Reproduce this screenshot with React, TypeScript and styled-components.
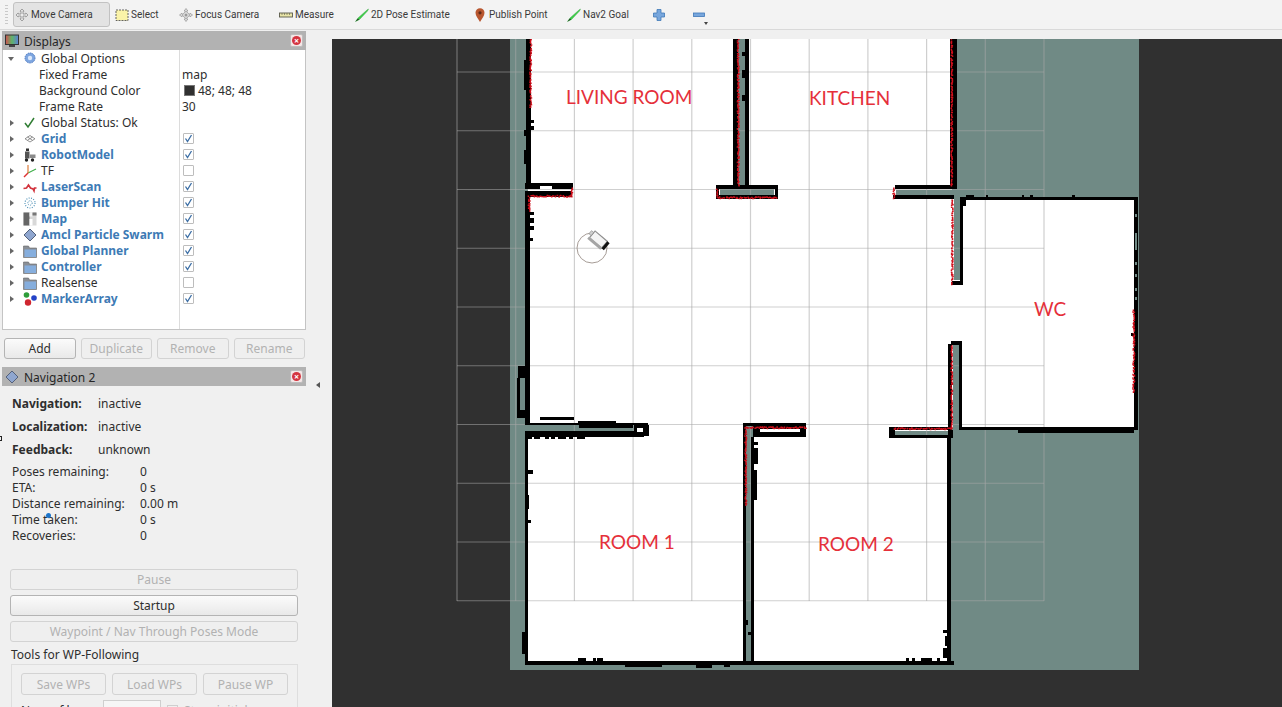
import { FC, ReactNode } from "react";
import styled, { createGlobalStyle } from "styled-components";

const GlobalStyle = createGlobalStyle`
  html, body {
    margin: 0;
    padding: 0;
    background: #f0f0f0;
  }
  * {
    box-sizing: border-box;
  }
`;

const Window = styled.div`
  width: 1282px;
  height: 707px;
  overflow: hidden;
  position: relative;
  display: flex;
  flex-direction: column;
  background: #f0f0f0;
  color: #2e2e2e;
  font-family: "Noto Sans", "Open Sans", sans-serif;
  font-size: 12px;
`;

const Toolbar = styled.div`
  height: 30px;
  flex: none;
  display: flex;
  align-items: flex-start;
  padding: 2px 0 0 5px;
  border-bottom: 1px solid #d9d9d9;
  background: #f3f3f3;
  font-family: "Roboto", "Noto Sans", sans-serif;
  font-size: 10px;
`;

const ToolbarHandle = styled.span`
  width: 3px;
  height: 20px;
  margin: 3px 5px 0 0;
  background: repeating-linear-gradient(#c9c9c9 0 1px, transparent 1px 3px);
`;

const Tool = styled.div<{ $width: number; $active?: boolean }>`
  width: ${({ $width }) => $width}px;
  height: 25px;
  flex: none;
  position: relative;
  display: flex;
  align-items: center;
  gap: 2px;
  padding-left: 2px;
  white-space: nowrap;
  color: #3a3a3a;
  ${({ $active }) =>
    $active
      ? "background: #e3e3e3; border: 1px solid #c2c2c2; border-radius: 3px; padding-left: 1px;"
      : ""}
`;

const ToolMenuArrow = styled.span`
  position: absolute;
  left: 14px;
  top: 20px;
  border-left: 2px solid transparent;
  border-right: 2px solid transparent;
  border-top: 3px solid #444;
`;

const Main = styled.div`
  flex: 1;
  display: flex;
  min-height: 0;
`;

const Sidebar = styled.div`
  width: 310px;
  flex: none;
  padding: 1px 4px 0 2px;
  overflow: hidden;
`;

const Splitter = styled.div`
  width: 22px;
  flex: none;
  display: flex;
  justify-content: center;
  padding-top: 352px;
`;

const SplitterArrow = styled.span`
  width: 0;
  height: 0;
  margin-left: -6px;
  border-top: 3px solid transparent;
  border-bottom: 3px solid transparent;
  border-right: 4px solid #555;
`;

const Viewport = styled.div`
  flex: 1;
  margin-top: 9px;
  position: relative;
  background: #303030;
  overflow: hidden;
`;

const MapCanvas = styled.svg`
  display: block;
  width: 950px;
  height: 668px;
  filter: blur(0.35px);
`;

const RoomLabel = styled.span<{ $x: number; $y: number }>`
  position: absolute;
  left: ${({ $x }) => $x - 332}px;
  top: ${({ $y }) => $y - 39}px;
  transform: translateY(-50%);
  font-family: "Lato", "Open Sans", sans-serif;
  font-size: 19px;
  line-height: 24px;
  color: #e5303a;
  white-space: nowrap;
`;

const DockTitle = styled.div`
  height: 19px;
  display: flex;
  align-items: center;
  gap: 5px;
  padding: 1px 3px 0;
  background: #b2b2b2;
  color: #262626;
`;

const DockName = styled.span`
  flex: 1;
`;

const CloseButton = styled.span`
  width: 13px;
  height: 13px;
  margin-top: -1px;
  border-radius: 2px;
  display: flex;
  align-items: center;
  justify-content: center;
  background: #f3e6e6;
  border: 1px solid #bdbdbd;
  &::after {
    content: "×";
    width: 9px;
    height: 9px;
    border-radius: 50%;
    background: #d4343f;
    color: #fff;
    font-size: 9px;
    line-height: 9px;
    text-align: center;
    font-weight: 700;
  }
`;

const Tree = styled.div`
  height: 280px;
  border: 1px solid #c4c4c4;
  border-top: none;
  background: linear-gradient(#dcdcdc, #dcdcdc) 176px 0 / 1px 100% no-repeat,
    #fff;
`;

const TreeRow = styled.div`
  height: 16px;
  display: grid;
  grid-template-columns: 177px 1fr;
  align-items: center;
`;

const TreeCell = styled.div<{ $indent?: number }>`
  display: flex;
  align-items: center;
  padding-left: ${({ $indent }) => $indent ?? 6}px;
  white-space: nowrap;
`;

const Expander = styled.span<{ $open?: boolean }>`
  width: 0;
  height: 0;
  ${({ $open }) =>
    $open
      ? `border-left: 3px solid transparent; border-right: 3px solid transparent; border-top: 4px solid #666; margin-left: -1px; margin-right: 9px;`
      : `border-top: 3px solid transparent; border-bottom: 3px solid transparent; border-left: 4px solid #666; margin-left: 1px; margin-right: 9px;`}
`;

const TreeIcon = styled.span`
  width: 14px;
  height: 14px;
  margin-right: 4px;
  display: flex;
  flex: none;
`;

const TreeLabel = styled.span<{ $on?: boolean }>`
  color: ${({ $on }) => ($on ? "#3d7ab5" : "#2e2e2e")};
  font-weight: ${({ $on }) => ($on ? 700 : 400)};
`;

const ValueCell = styled.div`
  padding-left: 2px;
  display: flex;
  align-items: center;
  gap: 3px;
`;

const Swatch = styled.span`
  width: 11px;
  height: 11px;
  margin-left: 2px;
  background: #303030;
  border: 1px solid #777;
`;

const Check = styled.span`
  width: 11px;
  height: 11px;
  margin-left: 1px;
  display: flex;
  background: #fff;
  border: 1px solid #bdbdbd;
  border-radius: 1px;
`;

const ButtonRow = styled.div`
  display: flex;
  gap: 5px;
  padding: 8px 1px 0 2px;
`;

const Button = styled.div<{ $off?: boolean; $height?: number }>`
  flex: 1;
  height: ${({ $height }) => $height ?? 21}px;
  display: flex;
  align-items: center;
  justify-content: center;
  border-radius: 3px;
  border: 1px solid ${({ $off }) => ($off ? "#d3d3d3" : "#b4b4b4")};
  background: ${({ $off }) =>
    $off ? "#efefef" : "linear-gradient(#fbfbfb, #e9e9e9)"};
  color: ${({ $off }) => ($off ? "#b2b2b2" : "#2e2e2e")};
  white-space: nowrap;
`;

const NavDock = styled.div`
  margin-top: 8px;
`;

const NavBody = styled.div`
  padding: 0 8px 0 8px;
`;

const StatusList = styled.div`
  padding: 9px 0 0 2px;
  display: flex;
  flex-direction: column;
  gap: 6px;
`;

const StatusRow = styled.div`
  height: 17px;
  display: grid;
  grid-template-columns: 86px 1fr;
  align-items: center;
`;

const StatusKey = styled.span`
  font-weight: 700;
`;

const StatsList = styled.div`
  padding: 5px 0 0 2px;
`;

const StatsRow = styled.div`
  height: 16px;
  display: grid;
  grid-template-columns: 128px 1fr;
  align-items: center;
  white-space: nowrap;
`;

const NavButtons = styled.div`
  margin-top: 26px;
  display: grid;
  row-gap: 5px;
`;

const GroupCaption = styled.div`
  height: 16px;
  margin-top: 5px;
  padding-left: 1px;
  line-height: 16px;
`;

const GroupBox = styled.div`
  height: 60px;
  margin: 1px 0 0 1px;
  padding: 8px 9px 0;
  border: 1px solid #dedede;
`;

const GroupButtons = styled.div`
  display: flex;
  gap: 6px;
`;

const LoopRow = styled.div`
  margin-top: 5px;
  display: flex;
  align-items: center;
  gap: 6px;
  white-space: nowrap;
`;

const LoopLabel = styled.span`
  width: 76px;
`;

const LoopInput = styled.span`
  width: 58px;
  height: 20px;
  background: #f6f6f6;
  border: 1px solid #cfcfcf;
`;

const LoopCheck = styled.span`
  width: 11px;
  height: 11px;
  border: 1px solid #cfcfcf;
`;

const LoopOption = styled.span`
  color: #b2b2b2;
`;

const CursorDot = styled.span`
  position: absolute;
  left: 46px;
  top: 513px;
  width: 5px;
  height: 5px;
  border-radius: 50%;
  background: #1c74c9;
`;

const EdgeMark = styled.span`
  position: absolute;
  left: 0;
  top: 436px;
  width: 2px;
  height: 5px;
  border: 1px solid #222;
  border-left: none;
`;

const IconSvg: FC<{ children: ReactNode; size?: number }> = ({ children, size = 14 }) => (
  <svg width={size} height={size} viewBox="0 0 14 14" style={{ flex: "none" }}>
    {children}
  </svg>
);

const MoveIcon = () => (
  <IconSvg>
    <path d="M7 1l2 2.200H8V6h2.800V5L13 7l-2.200 2V8H8v2.800h1L7 13l-2-2.200h1V8H3.200v1L1 7l2.200-2v1H6V3.200H5z" fill="#ececec" stroke="#8c8c8c" strokeWidth="0.8" />
  </IconSvg>
);

const SelectIcon = () => (
  <IconSvg>
    <rect x="1" y="2" width="12" height="10.500" fill="#faf3a8" stroke="#555" strokeWidth="0.9" strokeDasharray="2 1" />
  </IconSvg>
);

const FocusIcon = () => (
  <IconSvg>
    <path d="M7 0.500l1.800 2.500H7.700v1.200a3 3 0 012.100 2.100H11V5.200L13.500 7 11 8.800V7.700H9.800a3 3 0 01-2.100 2.100V11h1.100L7 13.500 5.200 11h1.100V9.800a3 3 0 01-2.100-2.100H3v1.100L0.500 7 3 5.200v1.100h1.200a3 3 0 012.100-2.100V3H5.200z" fill="#e6e6e6" stroke="#8f8f8f" strokeWidth="0.7" />
    <circle cx="7" cy="7" r="1.500" fill="#9a9a9a" />
  </IconSvg>
);

const RulerIcon = () => (
  <IconSvg>
    <rect x="0.500" y="5" width="13" height="4" fill="#e9e5a8" stroke="#5a5a4a" strokeWidth="0.9" />
    <path d="M3 5v2M5.500 5v2M8 5v2M10.500 5v2" stroke="#5a5a4a" strokeWidth="0.6" />
  </IconSvg>
);

const GoalIcon = () => (
  <IconSvg>
    <path d="M0.500 13.500L3 10l9-8 1.500-1L12.500 3 4.500 11.500z" fill="#3ed04a" stroke="#2a9a35" strokeWidth="0.4" />
    <path d="M0.500 13.500L3 10.500l1 1z" fill="#20311f" />
  </IconSvg>
);

const PinIcon = () => (
  <IconSvg>
    <path d="M7 14C5 10.500 2.500 8 2.500 4.800a4.500 4.500 0 019 0c0 3.200-2.500 5.700-4.500 9.200z" fill="#b8562f" />
    <circle cx="7" cy="4.800" r="1.600" fill="#5c2a18" />
  </IconSvg>
);

const PlusIcon = () => (
  <IconSvg>
    <path d="M5 1.500h4V5h3.500v4H9v3.500H5V9H1.500V5H5z" fill="#77a6dc" stroke="#3f78b8" strokeWidth="0.8" />
  </IconSvg>
);

const MinusIcon = () => (
  <IconSvg>
    <rect x="1.500" y="5" width="11" height="3.500" fill="#77a6dc" stroke="#3f78b8" strokeWidth="0.8" />
  </IconSvg>
);

const MonitorIcon = () => (
  <IconSvg>
    <defs>
      <linearGradient id="screen" x1="0" x2="1" y1="0" y2="0">
        <stop offset="0" stopColor="#d14f4f" />
        <stop offset="0.5" stopColor="#5fb56a" />
        <stop offset="1" stopColor="#5c7fd6" />
      </linearGradient>
    </defs>
    <rect x="0.500" y="1" width="13" height="9.500" fill="url(#screen)" stroke="#333" />
    <rect x="4" y="11" width="6" height="2" fill="#444" />
  </IconSvg>
);

const DiamondIcon = () => (
  <IconSvg>
    <path d="M7 1l6 6-6 6-6-6z" fill="#8fa6cf" stroke="#54617a" />
  </IconSvg>
);

const GearIcon = () => (
  <IconSvg>
    <circle cx="7" cy="6" r="5" fill="#7ea6e0" stroke="#4c78c0" strokeDasharray="1.500 0.800" />
    <circle cx="7" cy="6" r="2.200" fill="#dce8fa" />
  </IconSvg>
);

const CheckMarkIcon = () => (
  <IconSvg>
    <path d="M2 7l3 4 6-9" fill="none" stroke="#2f7d32" strokeWidth="1.500" />
  </IconSvg>
);

const GridIcon = () => (
  <IconSvg>
    <path d="M7 3.500l5 3.300-5 3.200-5-3.200zM4.500 5l5 3.300M9.500 5l-5 3.300" fill="#fff" stroke="#777" strokeWidth="0.8" />
  </IconSvg>
);

const RobotIcon = () => (
  <IconSvg>
    <rect x="3" y="0.500" width="3" height="2.500" fill="#333" />
    <rect x="2" y="3.500" width="4.500" height="7" fill="#555" />
    <rect x="7" y="6.500" width="5.500" height="3.500" fill="#8a8a8a" />
    <circle cx="3.500" cy="12" r="1.700" fill="#222" />
    <circle cx="9.500" cy="12" r="1.700" fill="#222" />
  </IconSvg>
);

const AxesIcon = () => (
  <IconSvg>
    <path d="M5 9l8-4" stroke="#3fae49" strokeWidth="1.100" />
    <path d="M5 9V1" stroke="#d8702a" strokeWidth="1.100" />
    <path d="M5 9l-4 4" stroke="#d33" strokeWidth="1.400" />
  </IconSvg>
);

const LaserIcon = () => (
  <IconSvg>
    <path d="M0.500 8.500l3-.5 2-3 2 3 2.500 1 1 2 .5-3h2" fill="none" stroke="#d2323c" strokeWidth="1.600" />
  </IconSvg>
);

const BumperIcon = () => (
  <IconSvg>
    <circle cx="7" cy="7" r="5" fill="none" stroke="#4d8fb5" strokeWidth="1.200" strokeDasharray="1 1.400" />
    <circle cx="7" cy="7" r="2.200" fill="none" stroke="#4d8fb5" strokeDasharray="1 1" />
  </IconSvg>
);

const MapIcon = () => (
  <IconSvg>
    <rect x="0.500" y="0.500" width="13" height="13" fill="#d8d8d8" />
    <rect x="0.500" y="0.500" width="6" height="13" fill="#666" />
    <rect x="6.500" y="0.500" width="3" height="4" fill="#f4f4f4" />
    <rect x="9.500" y="0.500" width="4" height="3" fill="#777" />
    <rect x="6.500" y="7" width="3" height="6.500" fill="#fff" />
  </IconSvg>
);

const FolderIcon = () => (
  <IconSvg>
    <path d="M0.500 2h5l1 2h7v9.500h-13z" fill="#8a8f96" stroke="#666" strokeWidth="0.6" />
    <rect x="1.500" y="5.500" width="11.500" height="7.500" fill="#86aedd" />
  </IconSvg>
);

const MarkerIcon = () => (
  <IconSvg>
    <circle cx="3.500" cy="3" r="2.800" fill="#2e9d3a" />
    <circle cx="11" cy="6" r="2.800" fill="#2443c7" />
    <circle cx="5" cy="10.500" r="3.200" fill="#cf2630" />
  </IconSvg>
);

const TickMark = () => (
  <svg width="9" height="9" viewBox="0 0 9 9">
    <path d="M1.500 4.500l2 3 4-6.500" fill="none" stroke="#3b6ea5" strokeWidth="1.300" />
  </svg>
);

interface DisplayItem {
  name: string;
  icon: ReactNode;
  checked: boolean;
}

const displayItems: DisplayItem[] = [
  { name: "Grid", icon: <GridIcon />, checked: true },
  { name: "RobotModel", icon: <RobotIcon />, checked: true },
  { name: "TF", icon: <AxesIcon />, checked: false },
  { name: "LaserScan", icon: <LaserIcon />, checked: true },
  { name: "Bumper Hit", icon: <BumperIcon />, checked: true },
  { name: "Map", icon: <MapIcon />, checked: true },
  { name: "Amcl Particle Swarm", icon: <DiamondIcon />, checked: true },
  { name: "Global Planner", icon: <FolderIcon />, checked: true },
  { name: "Controller", icon: <FolderIcon />, checked: true },
  { name: "Realsense", icon: <FolderIcon />, checked: false },
  { name: "MarkerArray", icon: <MarkerIcon />, checked: true },
];

const stats = [
  ["Poses remaining:", "0"],
  ["ETA:", "0 s"],
  ["Distance remaining:", "0.00 m"],
  ["Time taken:", "0 s"],
  ["Recoveries:", "0"],
];

type Box = [number, number, number, number];

const TEAL = "#708a85";

const whiteAreas: Box[] = [
  [528, 39, 424, 386],
  [952, 199, 183, 229],
  [528, 425, 215, 236],
  [753, 425, 195, 236],
];

const tealBlocks: Box[] = [
  [738, 39, 8, 150],
  [720, 189, 54, 6],
  [527, 425, 110, 6],
  [746, 430, 5, 231],
  [896, 190, 56, 5],
  [954, 197, 6, 83],
  [953, 345, 6, 85],
  [893, 431, 60, 4],
];

const walls: Box[] = [
  // left side
  [526, 39, 5, 144],
  [530, 120, 4, 3],
  [530, 126, 4, 4],
  [524, 60, 2, 30],
  [524, 130, 2, 6],
  [524, 150, 3, 14],
  [525, 183, 48, 6],
  [525, 191, 47, 6],
  [525, 197, 5, 180],
  [530, 212, 4, 3],
  [530, 218, 4, 5],
  [530, 226, 4, 4],
  [530, 238, 3, 3],
  [518, 366, 11, 12],
  [525, 377, 5, 46],
  [517, 378, 3, 38],
  [517, 410, 8, 8],
  [540, 417, 34, 3],
  [578, 421, 38, 3],
  // living room bottom
  [525, 423, 123, 2],
  [579, 425, 54, 3],
  [525, 431, 119, 6],
  [634, 425, 15, 11],
  [528, 437, 4, 2],
  [534, 437, 6, 2],
  [545, 437, 4, 2],
  [551, 437, 4, 2],
  [558, 437, 8, 2],
  [569, 437, 4, 2],
  [577, 437, 8, 2],
  // top middle stem
  [733, 39, 5, 146],
  [745, 39, 4, 146],
  [742, 52, 3, 4],
  [742, 70, 3, 8],
  [742, 95, 3, 6],
  [716, 185, 62, 4],
  [716, 195, 62, 4],
  [716, 189, 3, 6],
  [775, 189, 3, 6],
  // lower middle corner
  [743, 423, 63, 3],
  [753, 426, 53, 11],
  [743, 426, 3, 235],
  [751, 437, 3, 224],
  [754, 442, 4, 3],
  [754, 448, 4, 16],
  [754, 470, 3, 30],
  [746, 620, 2, 5],
  [748, 632, 3, 3],
  // top right stem
  [950, 39, 7, 146],
  [895, 185, 62, 4],
  [893, 195, 61, 4],
  [960, 199, 3, 86],
  [952, 281, 11, 4],
  [963, 199, 3, 7],
  // WC
  [960, 197, 175, 3],
  [966, 195, 8, 2],
  [986, 195, 2, 2],
  [1022, 195, 2, 2],
  [1030, 195, 3, 2],
  [1072, 195, 3, 2],
  [1134, 197, 4, 233],
  [1131, 333, 3, 3],
  [959, 345, 3, 85],
  [951, 341, 11, 4],
  [948, 344, 4, 86],
  [889, 427, 6, 11],
  [889, 427, 62, 3],
  [893, 435, 60, 3],
  [948, 430, 5, 8],
  [960, 427, 175, 3],
  [1018, 430, 116, 3],
  // lower rooms
  [525, 437, 3, 228],
  [947, 438, 4, 227],
  [525, 661, 429, 4],
  [578, 658, 8, 3],
  [593, 658, 3, 3],
  [597, 658, 6, 3],
  [522, 632, 3, 22],
  [625, 665, 37, 2],
  [696, 665, 16, 3],
  [724, 665, 6, 2],
  [906, 658, 3, 3],
  [912, 658, 3, 3],
  [921, 658, 11, 3],
  [937, 658, 3, 3],
  [943, 630, 4, 3],
  [945, 636, 2, 10],
  [943, 648, 4, 10],
  [525, 470, 8, 4],
  [525, 495, 4, 14],
  [525, 520, 6, 3],
];

const wallNotches: Box[] = [
  [540, 186, 12, 3],
  [637, 428, 6, 4],
  [760, 429, 40, 3],
];

const wcEdgeGaps: [number, number][] = [
  [214, 3],
  [233, 17],
  [262, 3],
  [274, 3],
  [288, 3],
  [297, 3],
];

const gridX = Array.from({ length: 11 }, (_, i) => 457 + i * 58.7);
const gridY = Array.from({ length: 10 }, (_, i) => 72 + i * 58.75);

const noise = (n: number) => {
  const v = Math.sin(n * 12.9898) * 43758.5453;
  return (v - Math.floor(v)) * 2 - 1;
};

// rough speckle along a wall, laser hits are never quite straight
const speckle = (x1: number, y1: number, x2: number, y2: number, seed: number) => {
  const steps = Math.round(Math.hypot(x2 - x1, y2 - y1));
  let d = "";
  for (let i = 0; i <= steps; i++) {
    const t = i / steps;
    const jx = noise(i + seed * 31) * 0.8;
    const jy = noise(i + seed * 57 + 0.5) * 0.8;
    d += `M${(x1 + (x2 - x1) * t + jx).toFixed(1)} ${(y1 + (y2 - y1) * t + jy).toFixed(1)}h1.500v1.500h-1.500z`;
  }
  return d;
};

const laserHits = [
  speckle(530, 39, 530, 107, 1),
  speckle(737.5, 39, 737.5, 185, 2),
  speckle(530, 195.500, 571, 195.500, 3),
  speckle(528.500, 196, 528.500, 210, 4),
  speckle(571, 187, 571, 195, 5),
  speckle(717, 197, 776, 197, 6),
  speckle(716.500, 189, 716.500, 196, 7),
  speckle(893, 188, 893, 197, 8),
  speckle(951, 39, 951, 185, 9),
  speckle(951.500, 199, 951.500, 284, 10),
  speckle(951, 345, 951, 428, 11),
  speckle(893, 428, 950, 428, 12),
  speckle(745, 427, 805, 427, 13),
  speckle(745, 427, 745, 505, 14),
  speckle(1133, 310, 1133, 392, 15),
].join("");

const rooms: [string, number, number][] = [
  ["LIVING ROOM", 566, 97],
  ["KITCHEN", 809, 98],
  ["WC", 1034, 309],
  ["ROOM 1", 599, 542],
  ["ROOM 2", 818, 544],
];

const OccupancyMap = () => (
  <MapCanvas viewBox="332 39 950 668">
    <g shapeRendering="crispEdges">
      <rect x="510" y="39" width="629" height="631" fill={TEAL} />
      {whiteAreas.map(([x, y, w, h]) => (
        <rect key={`${x}-${y}`} x={x} y={y} width={w} height={h} fill="#fff" />
      ))}
      {tealBlocks.map(([x, y, w, h]) => (
        <rect key={`${x}-${y}`} x={x} y={y} width={w} height={h} fill={TEAL} />
      ))}
    </g>
    {gridX.map(x => (
      <line key={x} x1={x} y1={39} x2={x} y2={601} stroke="#a8a8a8" strokeOpacity="0.55" strokeWidth="1.200" />
    ))}
    {gridY.map(y => (
      <line key={y} x1={457} y1={y} x2={1044} y2={y} stroke="#a8a8a8" strokeOpacity="0.55" strokeWidth="1.200" />
    ))}
    <g shapeRendering="crispEdges">
      {walls.map(([x, y, w, h]) => (
        <rect key={`${x}-${y}-${w}`} x={x} y={y} width={w} height={h} fill="#000" />
      ))}
      {wallNotches.map(([x, y, w, h]) => (
        <rect key={`${x}-${y}`} x={x} y={y} width={w} height={h} fill="#fff" />
      ))}
      {wcEdgeGaps.map(([y, h]) => (
        <rect key={y} x="1135" y={y} width="2" height={h} fill={TEAL} />
      ))}
    </g>
    <path d={laserHits} fill="#d0101c" />
    <circle cx="592" cy="248" r="15" fill="none" stroke="#9c918a" strokeWidth="0.900" />
    <g transform="translate(598 240) rotate(40)">
      <rect x="-8" y="-5" width="16" height="9" fill="#f4f4f4" stroke="#8f8f8f" strokeWidth="1.200" />
      <rect x="-9" y="3" width="17" height="3" fill="#a5a5a5" />
      <rect x="8" y="-5" width="3" height="9" fill="#111" />
      <rect x="-11" y="-3" width="3" height="4" fill="#cfcfcf" stroke="#777" strokeWidth="0.500" />
    </g>
  </MapCanvas>
);

export default function App() {
  return (
    <>
      <GlobalStyle />
      <Window>
        <Toolbar>
          <ToolbarHandle />
          <Tool $width={97} $active>
            <MoveIcon />
            Move Camera
          </Tool>
          <Tool $width={3} />
          <Tool $width={64}>
            <SelectIcon />
            Select
          </Tool>
          <Tool $width={100}>
            <FocusIcon />
            Focus Camera
          </Tool>
          <Tool $width={76}>
            <RulerIcon />
            Measure
          </Tool>
          <Tool $width={118}>
            <GoalIcon />
            2D Pose Estimate
          </Tool>
          <Tool $width={94}>
            <PinIcon />
            Publish Point
          </Tool>
          <Tool $width={85}>
            <GoalIcon />
            Nav2 Goal
          </Tool>
          <Tool $width={40}>
            <PlusIcon />
          </Tool>
          <Tool $width={22}>
            <MinusIcon />
            <ToolMenuArrow />
          </Tool>
        </Toolbar>
        <Main>
          <Sidebar>
            <DockTitle>
              <MonitorIcon />
              <DockName>Displays</DockName>
              <CloseButton />
            </DockTitle>
            <Tree>
              <TreeRow>
                <TreeCell>
                  <Expander $open />
                  <TreeIcon>
                    <GearIcon />
                  </TreeIcon>
                  <TreeLabel>Global Options</TreeLabel>
                </TreeCell>
              </TreeRow>
              <TreeRow>
                <TreeCell $indent={36}>
                  <TreeLabel>Fixed Frame</TreeLabel>
                </TreeCell>
                <ValueCell>map</ValueCell>
              </TreeRow>
              <TreeRow>
                <TreeCell $indent={36}>
                  <TreeLabel>Background Color</TreeLabel>
                </TreeCell>
                <ValueCell>
                  <Swatch />
                  48; 48; 48
                </ValueCell>
              </TreeRow>
              <TreeRow>
                <TreeCell $indent={36}>
                  <TreeLabel>Frame Rate</TreeLabel>
                </TreeCell>
                <ValueCell>30</ValueCell>
              </TreeRow>
              <TreeRow>
                <TreeCell>
                  <Expander />
                  <TreeIcon>
                    <CheckMarkIcon />
                  </TreeIcon>
                  <TreeLabel>Global Status: Ok</TreeLabel>
                </TreeCell>
              </TreeRow>
              {displayItems.map(item => (
                <TreeRow key={item.name}>
                  <TreeCell>
                    <Expander />
                    <TreeIcon>{item.icon}</TreeIcon>
                    <TreeLabel $on={item.checked}>{item.name}</TreeLabel>
                  </TreeCell>
                  <ValueCell>
                    <Check>{item.checked && <TickMark />}</Check>
                  </ValueCell>
                </TreeRow>
              ))}
            </Tree>
            <ButtonRow>
              <Button>Add</Button>
              <Button $off>Duplicate</Button>
              <Button $off>Remove</Button>
              <Button $off>Rename</Button>
            </ButtonRow>
            <NavDock>
              <DockTitle>
                <DiamondIcon />
                <DockName>Navigation 2</DockName>
                <CloseButton />
              </DockTitle>
              <NavBody>
                <StatusList>
                  <StatusRow>
                    <StatusKey>Navigation:</StatusKey>
                    <span>inactive</span>
                  </StatusRow>
                  <StatusRow>
                    <StatusKey>Localization:</StatusKey>
                    <span>inactive</span>
                  </StatusRow>
                  <StatusRow>
                    <StatusKey>Feedback:</StatusKey>
                    <span>unknown</span>
                  </StatusRow>
                </StatusList>
                <StatsList>
                  {stats.map(([key, value]) => (
                    <StatsRow key={key}>
                      <span>{key}</span>
                      <span>{value}</span>
                    </StatsRow>
                  ))}
                </StatsList>
                <NavButtons>
                  <Button $off>Pause</Button>
                  <Button>Startup</Button>
                  <Button $off>Waypoint / Nav Through Poses Mode</Button>
                </NavButtons>
                <GroupCaption>Tools for WP-Following</GroupCaption>
                <GroupBox>
                  <GroupButtons>
                    <Button $off $height={22}>Save WPs</Button>
                    <Button $off $height={22}>Load WPs</Button>
                    <Button $off $height={22}>Pause WP</Button>
                  </GroupButtons>
                  <LoopRow>
                    <LoopLabel>Num of loops:</LoopLabel>
                    <LoopInput />
                    <LoopCheck />
                    <LoopOption>Store initial pose</LoopOption>
                  </LoopRow>
                </GroupBox>
              </NavBody>
            </NavDock>
          </Sidebar>
          <Splitter>
            <SplitterArrow />
          </Splitter>
          <Viewport>
            <OccupancyMap />
            {rooms.map(([name, x, y]) => (
              <RoomLabel key={name} $x={x} $y={y}>
                {name}
              </RoomLabel>
            ))}
          </Viewport>
        </Main>
        <CursorDot />
        <EdgeMark />
      </Window>
    </>
  );
}
